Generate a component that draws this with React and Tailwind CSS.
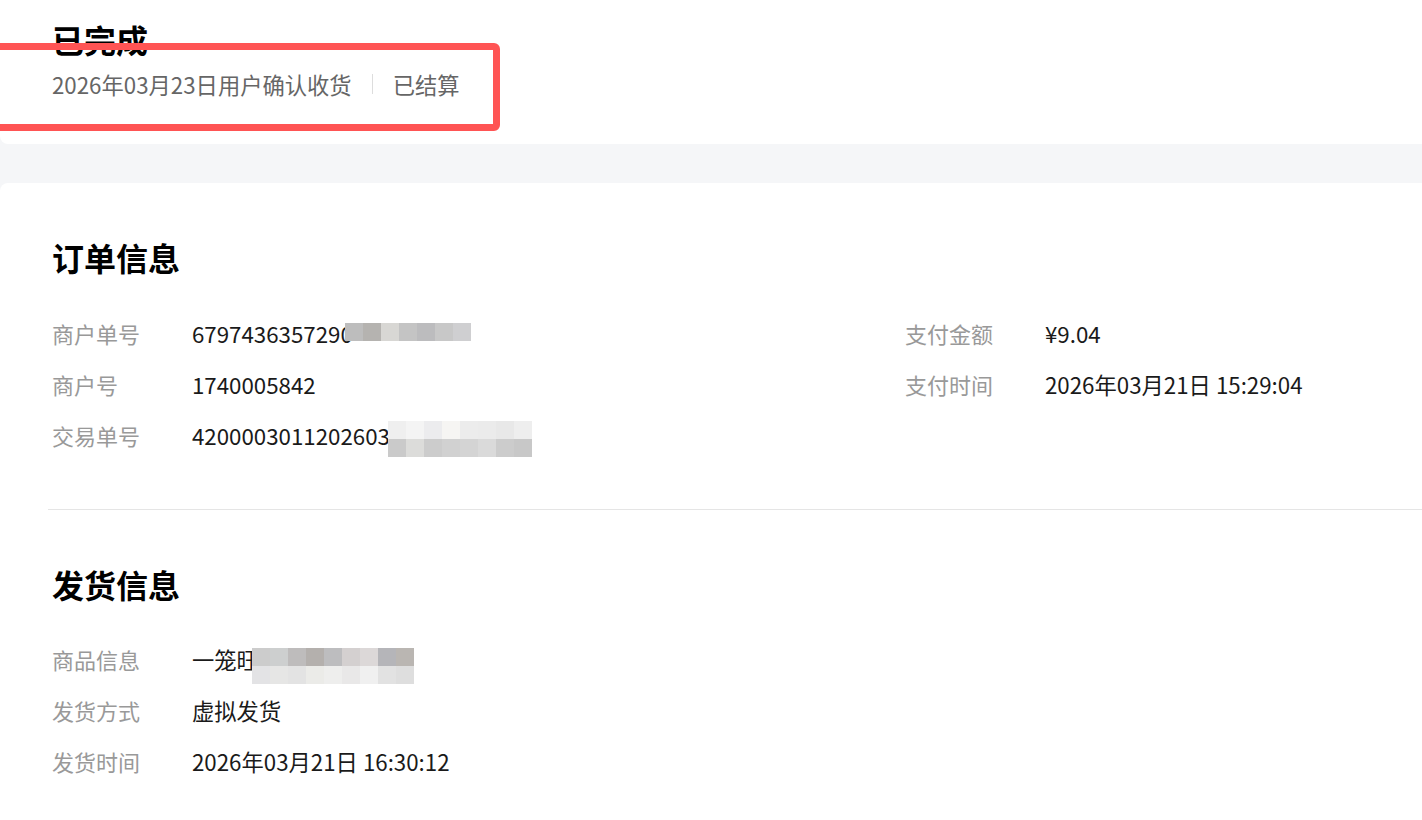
import React from "react";

const font = { fontFamily: '"Noto Sans CJK SC", "Noto Sans", sans-serif' };

// pixelated blur blocks, two rows of grey squares
const mosaics = {
  orderNo: {
    top: ["#bdbdbd", "#b5b3b0", "#d8d7d4", "#c4c4c4", "#bcbcbe", "#c8c8c8", "#cfcfd1"],
    bottom: [],
  },
  tradeNo: {
    top: ["#efefef", "#f4f4f4", "#ececee", "#f6f5f3", "#ececec", "#ebebeb", "#e8e8e8", "#eeeeee"],
    bottom: ["#cacaca", "#dcdcda", "#cccccc", "#d1d1d1", "#d4d4d4", "#dadada", "#cccccc", "#c8c8c8"],
  },
  goods: {
    top: ["#cccccc", "#cdcfcf", "#bebcbc", "#b4b0ad", "#bdbdbf", "#d4d0d0", "#dcd8d8", "#b5b5b9", "#bab6b2"],
    bottom: ["#e3e3e5", "#e6e6e5", "#e3e3e3", "#ebebe8", "#eeeeed", "#e9e8e8", "#f0f0f0", "#e2e2e2", "#dedede"],
  },
};

function Mosaic({ data, className }) {
  return (
    <span className={"inline-flex flex-col align-middle " + className}>
      <span className="flex">
        {data.top.map((c, i) => (
          <span key={i} className="block w-[18px] h-[18px]" style={{ background: c }} />
        ))}
      </span>
      {data.bottom.length > 0 && (
        <span className="flex">
          {data.bottom.map((c, i) => (
            <span key={i} className="block w-[18px] h-[18px]" style={{ background: c }} />
          ))}
        </span>
      )}
    </span>
  );
}

function Row({ label, children }) {
  return (
    <div className="flex h-[51px] items-center">
      <div className="w-[140px] shrink-0 text-[22px] text-[#999999]">{label}</div>
      <div className="flex items-center text-[22.3px] text-[#1a1a1a]">{children}</div>
    </div>
  );
}

export default function App() {
  return (
    <div className="relative min-h-screen bg-[#f5f6f8] overflow-hidden" style={font}>
      {/* status card */}
      <div className="bg-white rounded-bl-lg pl-[52px] pt-[17px] h-[144px]">
        <h1 className="text-[32px] leading-[44px] font-bold text-black">已完成</h1>
        <div className="mt-[8px] flex items-center text-[22.3px] leading-[30px] text-[#666666]">
          <span>2026年03月23日用户确认收货</span>
          <span className="mx-[20px] h-[20px] w-px bg-[#dddddd]" />
          <span>已结算</span>
        </div>
      </div>

      {/* annotation box */}
      <div className="absolute left-[-12px] top-[43px] w-[512px] h-[88px] border-[7px] border-[#ff5454] rounded-md pointer-events-none" />

      {/* detail card */}
      <div className="mt-[39px] bg-white rounded-tl-lg pl-[52px] pt-[52px] pb-[40px]">
        <h2 className="text-[32px] leading-[44px] font-bold text-black">订单信息</h2>
        <div className="mt-[29px] grid grid-cols-[853px_1fr]">
          <div>
            <Row label="商户单号">
              <span>6797436357290</span>
              <Mosaic data={mosaics.orderNo} className="-ml-[8px] -mt-[3px]" />
            </Row>
            <Row label="商户号">1740005842</Row>
            <Row label="交易单号">
              <span>4200003011202603</span>
              <Mosaic data={mosaics.tradeNo} className="-ml-[2px] mt-[6px]" />
            </Row>
          </div>
          <div>
            <Row label="支付金额">¥9.04</Row>
            <Row label="支付时间">2026年03月21日 15:29:04</Row>
          </div>
        </div>

        <div className="mt-[48px] -ml-[4px] h-px bg-[#e5e5e5]" />

        <h2 className="mt-[52px] text-[32px] leading-[44px] font-bold text-black">发货信息</h2>
        <div className="mt-[28px]">
          <Row label="商品信息">
            <span>一笼旺</span>
            <Mosaic data={mosaics.goods} className="ml-[-7px] mt-[12px]" />
          </Row>
          <Row label="发货方式">虚拟发货</Row>
          <Row label="发货时间">2026年03月21日 16:30:12</Row>
        </div>
      </div>
    </div>
  );
}
